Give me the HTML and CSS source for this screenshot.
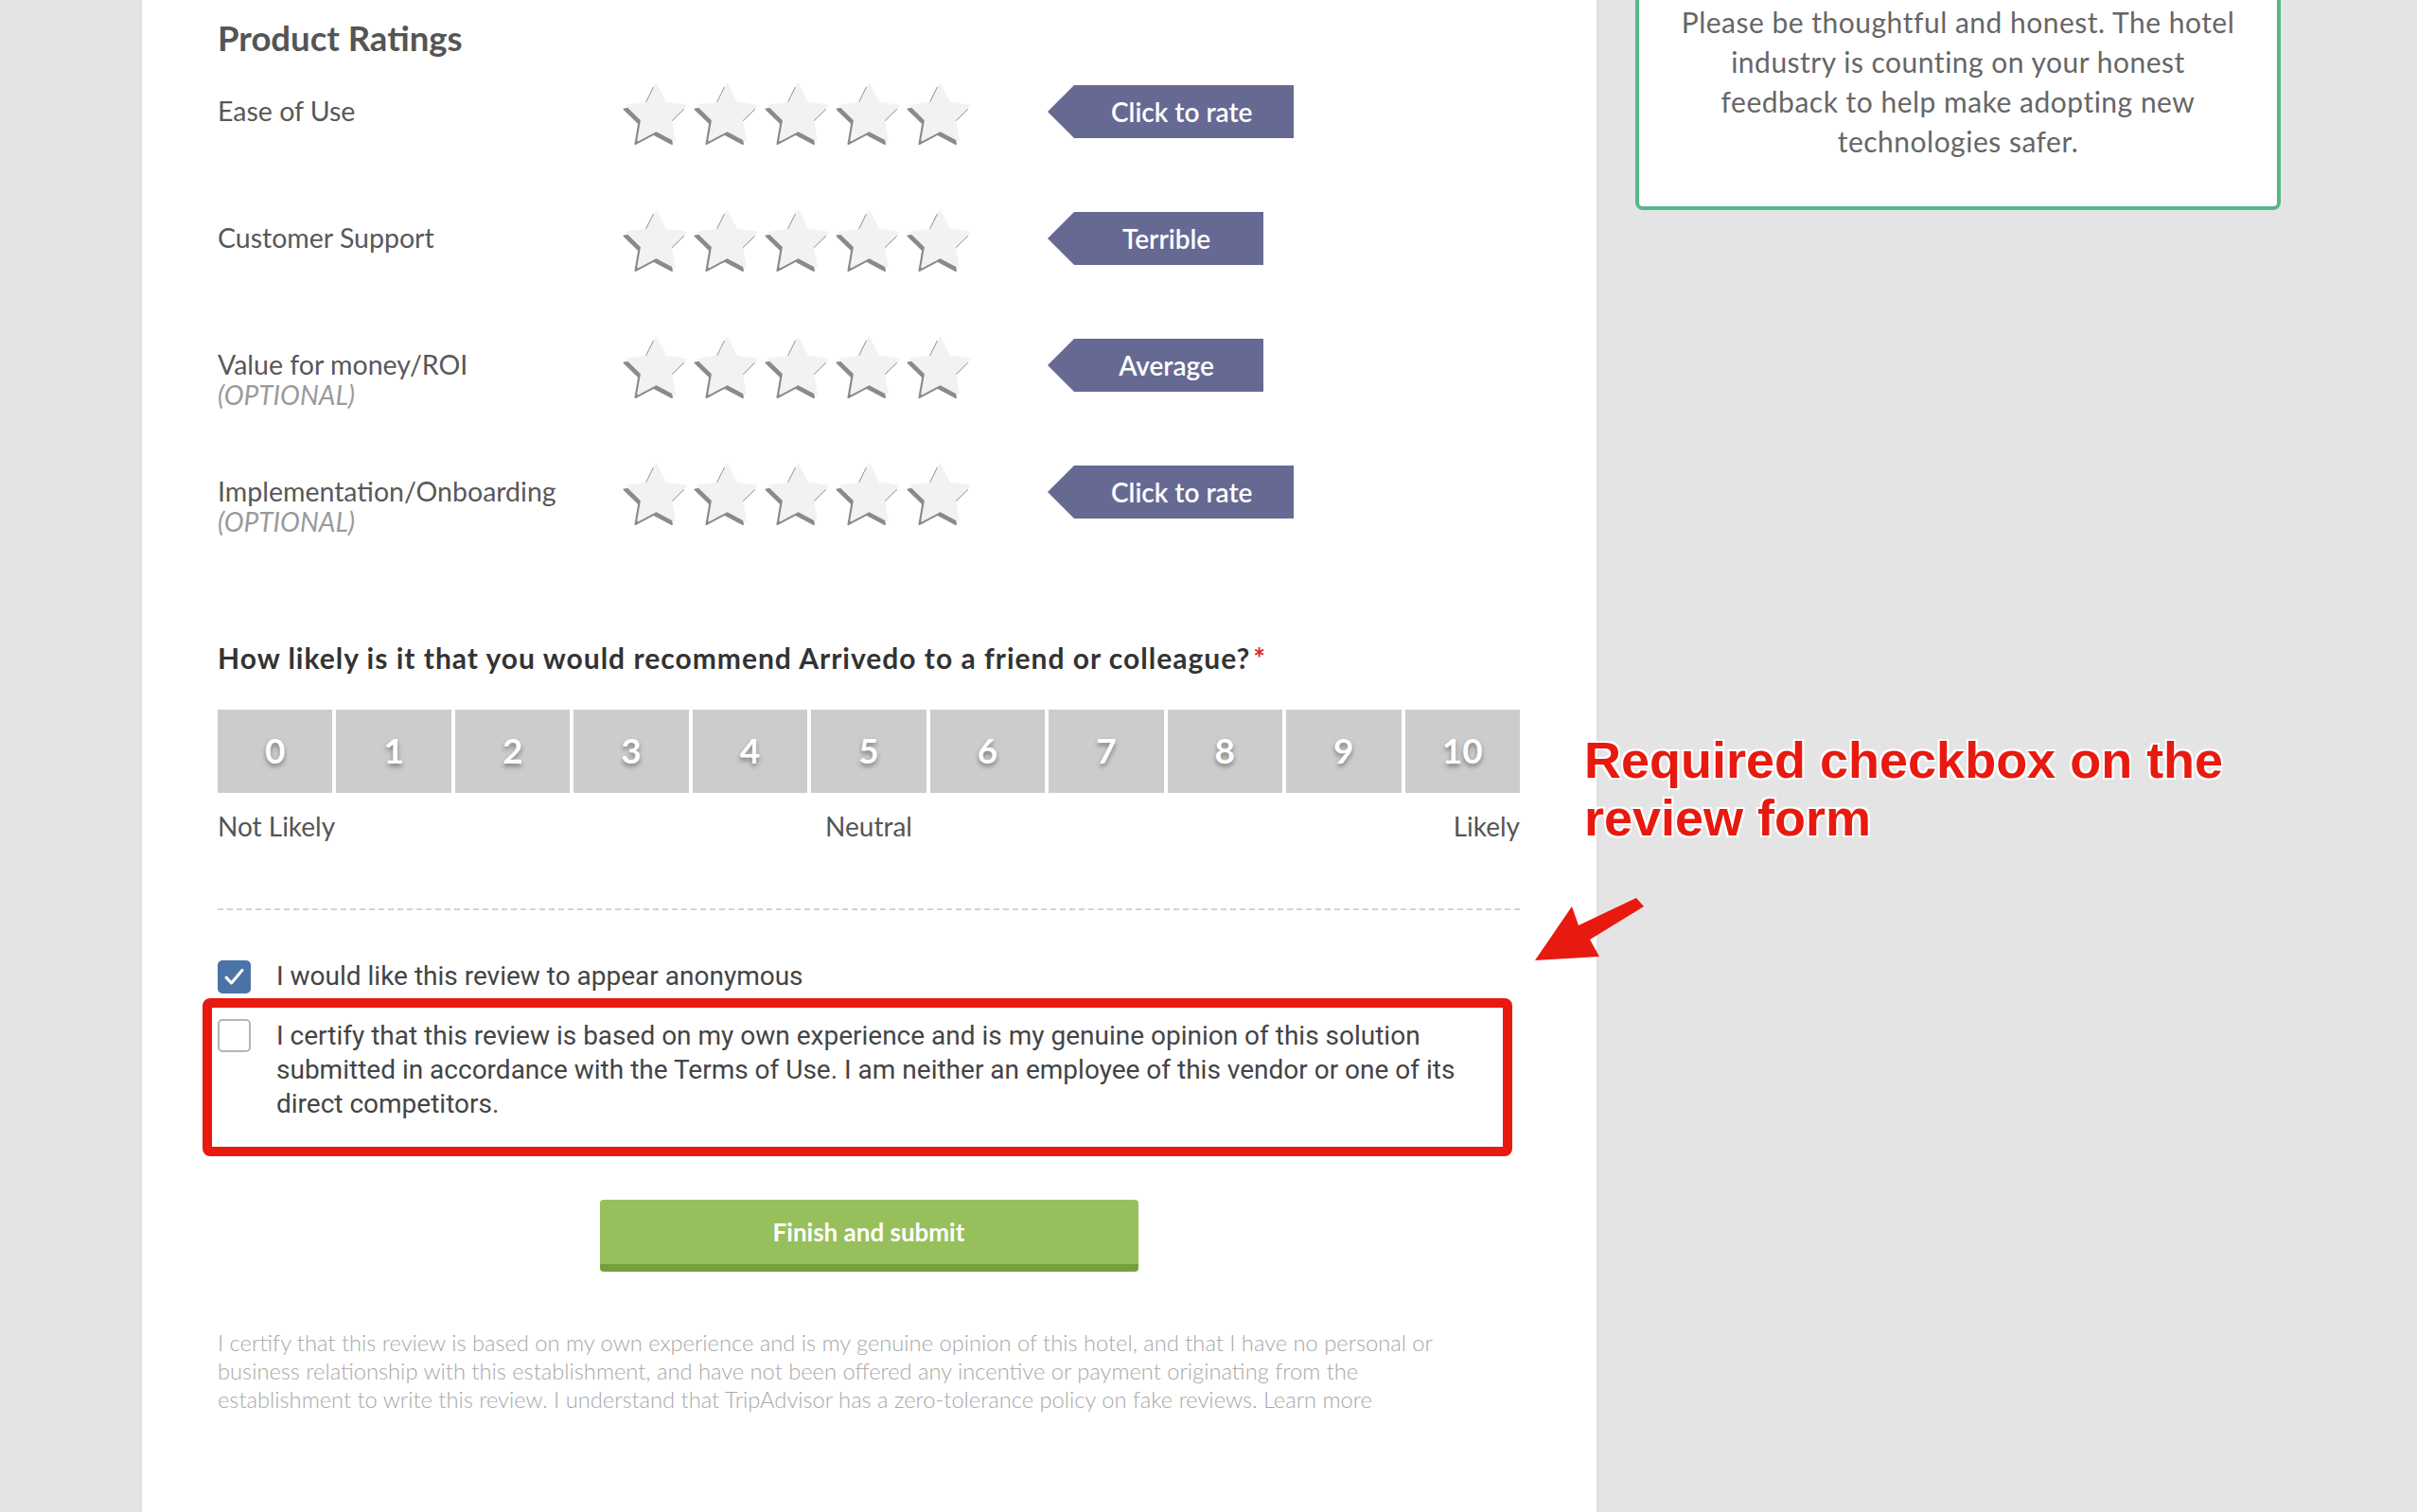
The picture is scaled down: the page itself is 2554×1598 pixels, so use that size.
FILE: index.html
```html
<!DOCTYPE html>
<html lang="en">
<head>
    <meta charset="UTF-8">
    <meta name="viewport" content="width=device-width, initial-scale=1.0">
    <title>Write a review</title>
    <link rel="stylesheet" href="styles.css">
</head>
<body>
    <svg class="defs" width="0" height="0">
      <defs>
        <path id="star-shape" d="M12 2l3.09 6.26L22 9.27l-5 4.87 1.18 6.88L12 17.77l-6.18 3.25L7 14.14 2 9.27l6.91-1.01L12 2z"/>
      </defs>
    </svg>

    <div class="page">
      <div class="panel">
        <h2 class="section-title">Product Ratings</h2>

        <div class="rating-row">
          <div class="rating-label">Ease of Use</div>
          <div class="stars">
            <svg class="star" viewBox="1.6 1.4 20.8 20.8"><use href="#star-shape" class="star-shadow"/><use href="#star-shape" class="star-fill"/></svg>
            <svg class="star" viewBox="1.6 1.4 20.8 20.8"><use href="#star-shape" class="star-shadow"/><use href="#star-shape" class="star-fill"/></svg>
            <svg class="star" viewBox="1.6 1.4 20.8 20.8"><use href="#star-shape" class="star-shadow"/><use href="#star-shape" class="star-fill"/></svg>
            <svg class="star" viewBox="1.6 1.4 20.8 20.8"><use href="#star-shape" class="star-shadow"/><use href="#star-shape" class="star-fill"/></svg>
            <svg class="star" viewBox="1.6 1.4 20.8 20.8"><use href="#star-shape" class="star-shadow"/><use href="#star-shape" class="star-fill"/></svg>
          </div>
          <div class="tag">Click to rate</div>
        </div>

        <div class="rating-row">
          <div class="rating-label">Customer Support</div>
          <div class="stars">
            <svg class="star" viewBox="1.6 1.4 20.8 20.8"><use href="#star-shape" class="star-shadow"/><use href="#star-shape" class="star-fill"/></svg>
            <svg class="star" viewBox="1.6 1.4 20.8 20.8"><use href="#star-shape" class="star-shadow"/><use href="#star-shape" class="star-fill"/></svg>
            <svg class="star" viewBox="1.6 1.4 20.8 20.8"><use href="#star-shape" class="star-shadow"/><use href="#star-shape" class="star-fill"/></svg>
            <svg class="star" viewBox="1.6 1.4 20.8 20.8"><use href="#star-shape" class="star-shadow"/><use href="#star-shape" class="star-fill"/></svg>
            <svg class="star" viewBox="1.6 1.4 20.8 20.8"><use href="#star-shape" class="star-shadow"/><use href="#star-shape" class="star-fill"/></svg>
          </div>
          <div class="tag">Terrible</div>
        </div>

        <div class="rating-row">
          <div class="rating-label">Value for money/ROI<span class="optional">(OPTIONAL)</span></div>
          <div class="stars">
            <svg class="star" viewBox="1.6 1.4 20.8 20.8"><use href="#star-shape" class="star-shadow"/><use href="#star-shape" class="star-fill"/></svg>
            <svg class="star" viewBox="1.6 1.4 20.8 20.8"><use href="#star-shape" class="star-shadow"/><use href="#star-shape" class="star-fill"/></svg>
            <svg class="star" viewBox="1.6 1.4 20.8 20.8"><use href="#star-shape" class="star-shadow"/><use href="#star-shape" class="star-fill"/></svg>
            <svg class="star" viewBox="1.6 1.4 20.8 20.8"><use href="#star-shape" class="star-shadow"/><use href="#star-shape" class="star-fill"/></svg>
            <svg class="star" viewBox="1.6 1.4 20.8 20.8"><use href="#star-shape" class="star-shadow"/><use href="#star-shape" class="star-fill"/></svg>
          </div>
          <div class="tag">Average</div>
        </div>

        <div class="rating-row">
          <div class="rating-label">Implementation/Onboarding<span class="optional">(OPTIONAL)</span></div>
          <div class="stars">
            <svg class="star" viewBox="1.6 1.4 20.8 20.8"><use href="#star-shape" class="star-shadow"/><use href="#star-shape" class="star-fill"/></svg>
            <svg class="star" viewBox="1.6 1.4 20.8 20.8"><use href="#star-shape" class="star-shadow"/><use href="#star-shape" class="star-fill"/></svg>
            <svg class="star" viewBox="1.6 1.4 20.8 20.8"><use href="#star-shape" class="star-shadow"/><use href="#star-shape" class="star-fill"/></svg>
            <svg class="star" viewBox="1.6 1.4 20.8 20.8"><use href="#star-shape" class="star-shadow"/><use href="#star-shape" class="star-fill"/></svg>
            <svg class="star" viewBox="1.6 1.4 20.8 20.8"><use href="#star-shape" class="star-shadow"/><use href="#star-shape" class="star-fill"/></svg>
          </div>
          <div class="tag">Click to rate</div>
        </div>

        <h3 class="question">How likely is it that you would recommend Arrivedo to a friend or colleague?<span class="required">*</span></h3>

        <div class="nps-scale">
          <div class="nps-box">0</div>
          <div class="nps-box">1</div>
          <div class="nps-box">2</div>
          <div class="nps-box">3</div>
          <div class="nps-box">4</div>
          <div class="nps-box">5</div>
          <div class="nps-box">6</div>
          <div class="nps-box">7</div>
          <div class="nps-box">8</div>
          <div class="nps-box">9</div>
          <div class="nps-box">10</div>
        </div>
        <div class="nps-labels">
          <span>Not Likely</span>
          <span class="mid">Neutral</span>
          <span class="end">Likely</span>
        </div>

        <div class="divider"></div>

        <label class="check-row">
          <span class="checkbox checked">
            <svg viewBox="0 0 24 24"><path d="M5.5 12.5l4.2 4.5L18.5 6.5"/></svg>
          </span>
          <span class="check-text">I would like this review to appear anonymous</span>
        </label>

        <label class="check-row check-row-top">
          <span class="checkbox"></span>
          <span class="check-text">I certify that this review is based on my own experience and is my genuine opinion of this solution submitted in accordance with the Terms of Use. I am neither an employee of this vendor or one of its direct competitors.</span>
          <span class="highlight-box"></span>
        </label>

        <div class="submit-wrap">
          <button class="submit-btn">Finish and submit</button>
        </div>

        <p class="fine-print">I certify that this review is based on my own experience and is my genuine opinion of this hotel, and that I have no personal or business relationship with this establishment, and have not been offered any incentive or payment originating from the establishment to write this review. I understand that TripAdvisor has a zero-tolerance policy on fake reviews. Learn more</p>
      </div>

      <div class="sidebar">
        <div class="tip-card">
          Please be thoughtful and honest. The hotel industry is counting on your honest feedback to help make adopting new technologies safer.
        </div>
      </div>

      <div class="callout">Required checkbox on the<br>review form</div>
      <svg class="callout-arrow" viewBox="0 0 140 90" width="140" height="90">
        <polygon points="12,75 51,18 58,38 119,9 127,18 70,53 80,71"/>
      </svg>
    </div>
</body>
</html>
```

FILE: styles.css
```css
body {
  margin: 0;
  background: #e4e4e4;
  font-family: 'Lato', 'Open Sans', sans-serif;
  color: #666;
}

.defs {
  position: absolute;
}

.page {
  position: relative;
  display: flex;
  align-items: flex-start;
  gap: 41px;
  padding-left: 150px;
  height: 1598px;
  overflow: hidden;
}

.panel {
  width: 1537px;
  min-height: 1598px;
  box-sizing: border-box;
  padding: 19px 81px 0 80px;
  background: #fff;
  box-shadow: 0 0 6px rgba(0, 0, 0, 0.06);
}

.section-title {
  margin: 0 0 26px;
  font-size: 36.5px;
  line-height: 42px;
  font-weight: 700;
  color: #555;
}

/* rating rows */
.rating-row {
  display: flex;
  align-items: flex-start;
  height: 134px;
}

.rating-label {
  width: 431px;
  padding-top: 13px;
  font-size: 28.5px;
  line-height: 34px;
  color: #585858;
}

.optional {
  display: block;
  font-size: 28px;
  line-height: 30px;
  font-style: italic;
  color: #9a9a9a;
}

.stars {
  display: flex;
  gap: 10px;
}

.star {
  width: 65px;
  height: 65px;
  overflow: visible;
}

.star-shadow {
  fill: #8a8a8a;
  stroke: #8a8a8a;
  stroke-width: 0.6;
  stroke-linejoin: round;
  transform: translate(-0.9px, 1.2px);
}

.star-fill {
  fill: #f2f2f2;
  stroke: #f2f2f2;
  stroke-width: 0.6;
  stroke-linejoin: round;
}

.tag {
  margin: 3px 0 0 81px;
  min-width: 228px;
  height: 56px;
  box-sizing: border-box;
  padding: 0 44px 0 67px;
  background: #666a93;
  color: #fff;
  font-size: 28px;
  line-height: 56px;
  font-weight: 600;
  text-align: center;
  white-space: nowrap;
  clip-path: polygon(28px 0, 100% 0, 100% 100%, 28px 100%, 0 50%);
}

/* recommend scale */
.question {
  margin: 54px 0 0;
  font-size: 30px;
  line-height: 36px;
  font-weight: 700;
  letter-spacing: 1px;
  color: #333;
}

.required {
  color: #e2271d;
  margin-left: 3px;
}

.nps-scale {
  display: grid;
  grid-template-columns: repeat(11, 1fr);
  gap: 4px;
  margin-top: 37px;
}

.nps-box {
  height: 88px;
  background: #cccccc;
  color: #fff;
  font-size: 37px;
  font-weight: 700;
  line-height: 86px;
  text-align: center;
  text-shadow: 0 3px 5px rgba(0, 0, 0, 0.4);
}

.nps-labels {
  display: grid;
  grid-template-columns: 1fr auto 1fr;
  margin-top: 19px;
  font-size: 28px;
  line-height: 32px;
  color: #555;
}

.nps-labels .mid {
  text-align: center;
}

.nps-labels .end {
  text-align: right;
}

.divider {
  margin-top: 71px;
  border-top: 2px dashed #d2d2d2;
}

/* checkboxes */
.check-row {
  position: relative;
  display: flex;
  align-items: center;
  gap: 27px;
  margin-top: 52px;
  font-family: 'Roboto', 'Liberation Sans', sans-serif;
  font-size: 28px;
  line-height: 36px;
  color: #444;
}

.check-row-top {
  align-items: flex-start;
  margin-top: 27px;
}

.checkbox {
  flex: 0 0 35px;
  width: 35px;
  height: 35px;
  box-sizing: border-box;
  border: 2px solid #b5b5b5;
  border-radius: 5px;
  background: #fff;
}

.checkbox.checked {
  border-color: #4a73a8;
  background: #4a73a8;
}

.checkbox svg {
  display: block;
  width: 100%;
  height: 100%;
  fill: none;
  stroke: #fff;
  stroke-width: 2.4;
  stroke-linecap: round;
  stroke-linejoin: round;
}

.check-text {
  flex: 1;
}

.highlight-box {
  position: absolute;
  top: -22px;
  left: -16px;
  width: 1384px;
  height: 167px;
  box-sizing: border-box;
  border: 10px solid #e8190f;
  border-radius: 8px;
}

/* submit */
.submit-wrap {
  display: flex;
  justify-content: center;
  margin-top: 83px;
}

.submit-btn {
  width: 569px;
  height: 76px;
  border: none;
  border-bottom: 8px solid #74a03a;
  border-radius: 4px;
  background: #97c05c;
  color: #fff;
  font-family: 'Lato', sans-serif;
  font-size: 26px;
  font-weight: 700;
  cursor: pointer;
}

.fine-print {
  max-width: 1330px;
  margin: 60px 0 0;
  font-size: 23.7px;
  line-height: 30px;
  font-weight: 300;
  color: #a8a8a8;
}

/* sidebar */
.sidebar {
  width: 682px;
}

.tip-card {
  margin-top: -60px;
  padding: 58px 36px 48px;
  border: 4px solid #55b887;
  border-radius: 8px;
  background: #fff;
  font-size: 30px;
  line-height: 42px;
  letter-spacing: 0.5px;
  color: #666;
  text-align: center;
}

/* annotation */
.callout {
  position: absolute;
  left: 1674px;
  top: 773px;
  font-family: 'Liberation Sans', Arial, sans-serif;
  font-size: 54px;
  line-height: 61px;
  font-weight: 700;
  color: #e8190f;
  text-shadow: -2px -2px 0 #fff, 2px -2px 0 #fff, -2px 2px 0 #fff, 2px 2px 0 #fff;
}

.callout-arrow {
  position: absolute;
  left: 1610px;
  top: 940px;
  fill: #e8190f;
}
```
